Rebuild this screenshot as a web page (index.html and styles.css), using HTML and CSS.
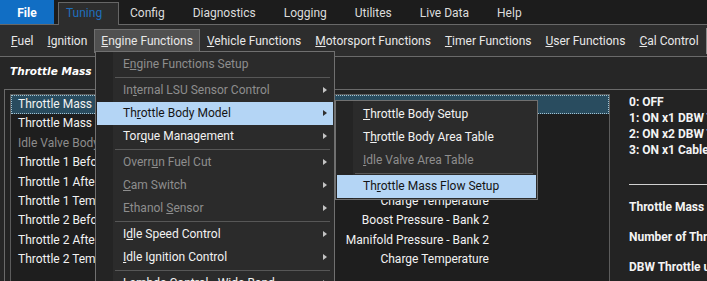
FILE: index.html
```html
<!DOCTYPE html>
<html lang="en">
<head>
    <meta charset="UTF-8">
    <meta name="viewport" content="width=device-width, initial-scale=1.0">
    <title>Tuning - Engine Functions</title>
    <link rel="stylesheet" href="styles.css">
</head>
<body>
    <div class="app">
        <div class="tabs">
            <span class="tab tab-file">File</span>
            <span class="tab tab-active">Tuning</span>
            <span class="tab">Config</span>
            <span class="tab">Diagnostics</span>
            <span class="tab">Logging</span>
            <span class="tab">Utilites</span>
            <span class="tab">Live Data</span>
            <span class="tab">Help</span>
        </div>

        <div class="toolbar">
            <span class="tool"><u>F</u>uel</span>
            <span class="tool"><u>I</u>gnition</span>
            <span class="tool tool-open"><u>E</u>ngine Functions</span>
            <span class="tool"><u>V</u>ehicle Functions</span>
            <span class="tool"><u>M</u>otorsport Functions</span>
            <span class="tool"><u>T</u>imer Functions</span>
            <span class="tool"><u>U</u>ser Functions</span>
            <span class="tool"><u>C</u>al Control</span>
            <span class="tool-sep"></span>
        </div>

        <div class="page">
            <div class="page-title">Throttle Mass Flow Setup</div>

            <div class="group">
                <div class="list">
                    <div class="row selected"><span>Throttle Mass Flow Mode</span><span></span></div>
                    <div class="row"><span>Throttle Mass Flow Scaling</span><span>Throttle Position</span></div>
                    <div class="row disabled"><span>Idle Valve Body Flow</span><span>Idle Valve Position</span></div>
                    <div class="row"><span>Throttle 1 Before Pressure</span><span>Boost Pressure - Bank 1</span></div>
                    <div class="row"><span>Throttle 1 After Pressure</span><span>Manifold Pressure - Bank 1</span></div>
                    <div class="row"><span>Throttle 1 Temperature</span><span>Charge Temperature</span></div>
                    <div class="row"><span>Throttle 2 Before Pressure</span><span>Boost Pressure - Bank 2</span></div>
                    <div class="row"><span>Throttle 2 After Pressure</span><span>Manifold Pressure - Bank 2</span></div>
                    <div class="row"><span>Throttle 2 Temperature</span><span>Charge Temperature</span></div>
                </div>

                <div class="info">
                    <p>0: OFF</p>
                    <p>1: ON x1 DBW Throttle</p>
                    <p>2: ON x2 DBW Throttles</p>
                    <p>3: ON x1 Cable Throttle</p>
                    <div class="info-rule"></div>
                    <p class="info-block">Throttle Mass Flow Mode</p>
                    <p class="info-block">Number of Throttles</p>
                    <p class="info-block">DBW Throttle uses throttle target</p>
                    <p>Cable Throttle uses throttle position</p>
                </div>
            </div>
        </div>

        <!-- Engine Functions dropdown -->
        <div class="menu menu-main">
            <div class="item disabled">E<u>n</u>gine Functions Setup</div>
            <div class="sep"></div>
            <div class="item disabled">In<u>t</u>ernal LSU Sensor Control<span class="arrow"></span></div>
            <div class="item active">Th<u>r</u>ottle Body Model<span class="arrow"></span></div>
            <div class="item">Tor<u>q</u>ue Management<span class="arrow"></span></div>
            <div class="sep"></div>
            <div class="item disabled">Overr<u>u</u>n Fuel Cut<span class="arrow"></span></div>
            <div class="item disabled"><u>C</u>am Switch<span class="arrow"></span></div>
            <div class="item disabled">Ethanol <u>S</u>ensor<span class="arrow"></span></div>
            <div class="sep"></div>
            <div class="item">I<u>d</u>le Speed Control<span class="arrow"></span></div>
            <div class="item"><u>I</u>dle Ignition Control<span class="arrow"></span></div>
            <div class="sep"></div>
            <div class="item"><u>L</u>ambda Control - Wide Band<span class="arrow"></span></div>
        </div>

        <!-- Throttle Body Model submenu -->
        <div class="menu menu-sub">
            <div class="item"><u>T</u>hrottle Body Setup</div>
            <div class="item">T<u>h</u>rottle Body Area Table</div>
            <div class="item disabled"><u>I</u>dle Valve Area Table</div>
            <div class="sep"></div>
            <div class="item active">Th<u>r</u>ottle Mass Flow Setup</div>
        </div>
    </div>
</body>
</html>
```

FILE: styles.css
```css
* {
    box-sizing: border-box;
}
body {
    margin: 0;
    width: 707px;
    height: 281px;
    overflow: hidden;
    background-color: #262626;
    font-family: Roboto, "Noto Sans", sans-serif;
    font-size: 12px;
    color: #f0f0f0;
}
.app {
    position: relative;
    height: 100%;
}

/* top tabs */
.tabs {
    display: flex;
    align-items: flex-end;
    height: 25px;
    background-color: #1c1c1c;
    border-bottom: 1px solid #686868;
}
.tab {
    height: 23px;
    line-height: 21px;
    margin-bottom: -1px;
    margin-left: 3px;
    padding: 0 16px 0 7px;
    border: 1px solid transparent;
    border-bottom: none;
    color: #dcdcdc;
    white-space: nowrap;
}
.tab-file {
    width: 54px;
    height: 24px;
    line-height: 26px;
    margin: 0;
    padding: 0;
    border: none;
    text-align: center;
    font-weight: bold;
    color: white;
    background-color: #116ec4;
}
.tab-active {
    width: 61px;
    margin-left: 4px;
    border-color: #666;
    background-color: #2d2d2d;
    color: #1f6fbd;
}

/* second row of buttons */
.toolbar {
    display: flex;
    align-items: center;
    height: 32px;
    padding: 0 1px 0 4px;
    background-color: #2d2d2d;
    border-bottom: 1px solid #6a6a6a;
}
.tool {
    padding: 0 6px;
    line-height: 22px;
    border: 1px solid transparent;
    color: #e8e8e8;
    white-space: nowrap;
}
.tool-open {
    background-color: #505050;
    border-color: #6e6e6e;
}
.tool-sep {
    margin-left: auto;
    width: 1px;
    height: 26px;
    background-color: #8a8a8a;
}

/* page */
.page-title {
    height: 32px;
    line-height: 28px;
    padding-left: 10px;
    font-family: "DejaVu Sans", sans-serif;
    font-size: 10.5px;
    font-weight: bold;
    font-style: italic;
    color: white;
}
.group {
    display: flex;
    gap: 19px;
    margin-left: 4px;
    padding: 4px 0 0 5px;
    border-top: 1px solid #6a6a6a;
    border-left: 1px solid #6a6a6a;
    background-color: #232323;
    height: 200px;
}
.list {
    flex: none;
    width: 600px;
    border: 1px solid #5c5c5c;
    background-color: #1e1e1e;
}
.row {
    display: grid;
    grid-template-columns: 300px 171px;
    height: 19.4px;
    line-height: 19.4px;
    padding-left: 7px;
    white-space: nowrap;
    color: #f2f2f2;
}
.row span:last-child {
    text-align: right;
}
.row.disabled {
    color: #8c8c8c;
}
.row.selected {
    background-color: #294c5f;
    outline: 1px dotted #a3c3d2;
    outline-offset: -1px;
}
.info {
    white-space: nowrap;
    font-weight: bold;
    line-height: 16px;
    color: #f4f4f4;
}
.info p {
    margin: 0;
}
.info-rule {
    height: 1px;
    margin: 26px 0 14px;
    background-color: #d0d0d0;
}
.info p.info-block {
    margin-bottom: 14px;
}

/* dropdown menus */
.menu {
    position: absolute;
    padding: 1px;
    border: 1px solid #707070;
    background: linear-gradient(to right, #242424 17px, #2b2b2b 17px);
}
.menu-main {
    left: 95px;
    top: 51px;
    width: 240px;
}
.menu-sub {
    left: 335px;
    top: 100px;
    width: 203px;
    padding-top: 2px;
}
.item {
    position: relative;
    height: 23px;
    line-height: 23px;
    padding-left: 26px;
    color: #f2f2f2;
    white-space: nowrap;
}
.item.disabled {
    color: #8e8e8e;
}
.item.active {
    background-color: #b4d5f5;
    color: #141414;
}
.sep {
    height: 1px;
    margin: 1px 3px 1px 18px;
    background-color: #575757;
}
.arrow {
    position: absolute;
    right: 6px;
    top: 8px;
    border-left: 4px solid #c4c4c4;
    border-top: 3.5px solid transparent;
    border-bottom: 3.5px solid transparent;
}
.item.active .arrow {
    border-left-color: #303030;
}
```
